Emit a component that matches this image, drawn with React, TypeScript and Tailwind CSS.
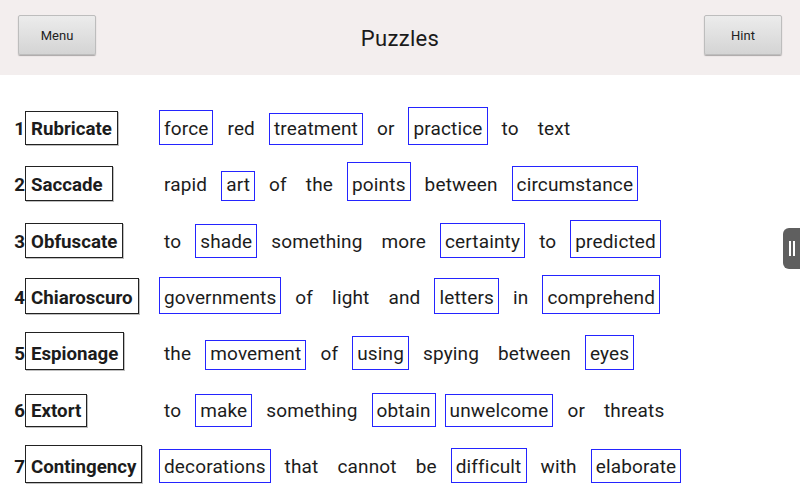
import React from "react";

type W = string | [string, number];
type Row = { n: number; term: string; th: number; words: W[] };

const rows: Row[] = [
  { n: 1, term: "Rubricate", th: 34, words: [["force", 35], "red", ["treatment", 32], "or", ["practice", 38], "to", "text"] },
  { n: 2, term: "Saccade ", th: 35, words: ["rapid", ["art", 30], "of", "the", ["points", 39], "between", ["circumstance", 35]] },
  { n: 3, term: "Obfuscate", th: 35, words: ["to", ["shade", 34], "something", "more", ["certainty", 35], "to", ["predicted", 38]] },
  { n: 4, term: "Chiaroscuro", th: 36, words: [["governments", 37], "of", "light", "and", ["letters", 36], "in", ["comprehend", 39]] },
  { n: 5, term: "Espionage", th: 38, words: ["the", ["movement", 30], "of", ["using", 34], "spying", "between", ["eyes", 35]] },
  { n: 6, term: "Extort", th: 33, words: ["to", ["make", 33], "something", ["obtain", 34], ["unwelcome", 33], "or", "threats"] },
  { n: 7, term: "Contingency", th: 38, words: [["decorations", 34], "that", "cannot", "be", ["difficult", 35], "with", ["elaborate", 34]] },
];

function Btn({ label }: { label: string }) {
  return (
    <div className="w-[78px] h-[40px] flex items-center justify-center border border-[#bdbdbd] rounded-[2px] bg-gradient-to-b from-[#ececec] to-[#d4d4d4] shadow-[0_1px_1px_rgba(0,0,0,0.3)] text-[13px] text-[#222] pt-[2px]">
      {label}
    </div>
  );
}

export default function App() {
  return (
    <div className="relative w-[800px] h-[500px] overflow-hidden bg-white text-[#1c1c1c]" style={{ fontFamily: "Roboto, 'Noto Sans', sans-serif" }}>
      <div className="h-[75px] bg-[#f3eeee] flex items-center justify-between px-[18px] pb-[5px]">
        <Btn label="Menu" />
        <div className="text-[22px] leading-none text-[#1a1a1a] pt-[8px] tracking-[0.3px]">Puzzles</div>
        <Btn label="Hint" />
      </div>
      <div className="flex flex-col pt-[13.67px]">
        {rows.map((r) => (
          <div key={r.n} className="h-[56.33px] flex items-end">
            <div className="w-[159px] flex items-end shrink-0">
              <div className="w-[25px] text-right text-[18.7px] font-bold leading-[22px] pb-[5px]">{r.n}</div>
              <div
                className="border border-[#222] px-[5px] pb-[4px] text-[18.7px] font-bold leading-[22px] whitespace-pre shadow-[1px_1px_0_rgba(0,0,0,0.25)]"
                style={{ paddingTop: r.th - 28 }}
              >
                {r.term}
              </div>
            </div>
            <div className="flex items-end gap-[9px]">
              {r.words.map((w, i) =>
                typeof w === "string" ? (
                  <div key={i} className="border border-transparent px-[4px] pb-[4px] text-[19px] leading-[22px] tracking-[0.15px]">
                    {w}
                  </div>
                ) : (
                  <div
                    key={i}
                    className="border border-[#2424ff] px-[4px] pb-[4px] text-[19px] leading-[22px] tracking-[0.15px]"
                    style={{ paddingTop: w[1] - 28 }}
                  >
                    {w[0]}
                  </div>
                )
              )}
            </div>
          </div>
        ))}
      </div>
      <div className="absolute right-0 top-[228px] w-[17px] h-[41px] bg-[#5f5f5f] rounded-l-[6px] flex items-center justify-center gap-[2px]">
        <div className="w-[2px] h-[15px] bg-white" />
        <div className="w-[2px] h-[15px] bg-white" />
      </div>
    </div>
  );
}
